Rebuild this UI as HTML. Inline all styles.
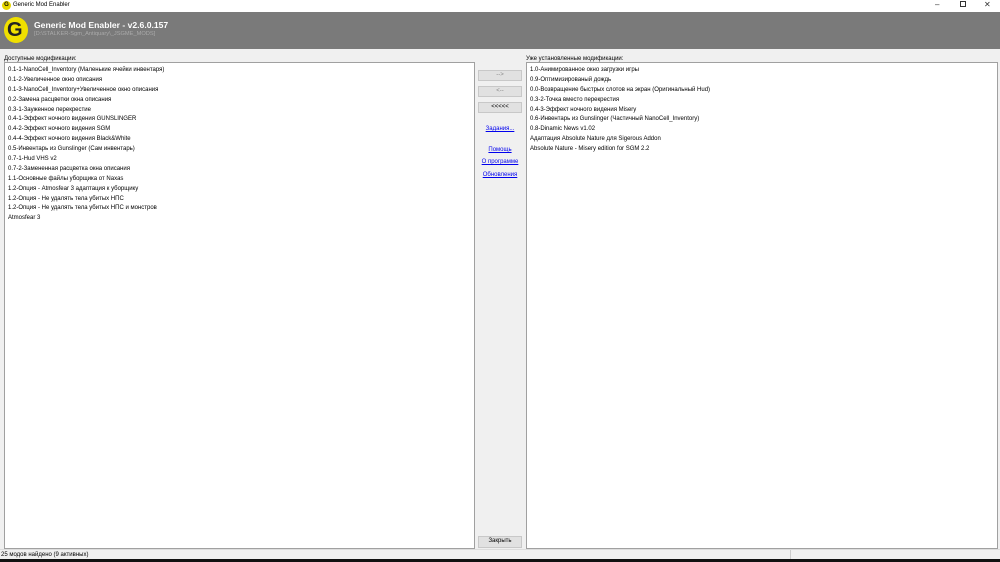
<!DOCTYPE html>
<html><head><meta charset="utf-8"><style>
*{margin:0;padding:0;box-sizing:border-box}
body{width:1000px;height:562px;background:#f0f0f0;font-family:"Liberation Sans","Noto Sans CJK SC",sans-serif;font-size:6px;color:#000;position:relative;overflow:hidden}
.abs{position:absolute}
.list{position:absolute;background:#fff;border:1px solid #a0a0a0;top:62px;height:487px;padding-top:3px}
.list div{height:9.9px;line-height:9.9px;padding-left:3px;white-space:nowrap}
.btn{position:absolute;left:478px;width:44px;height:11px;background:#e1e1e1;border:1px solid #c8c8c8;text-align:center;line-height:9px;color:#888}
.lnk{position:absolute;left:478px;width:44px;text-align:center;color:#0000ee;text-decoration:underline}
</style></head><body>
<div class="abs" style="left:0;top:0;width:1000px;height:12px;background:#fff"></div>
<div class="abs" style="left:2px;top:1px;width:9px;height:9px;border-radius:50%;background:#e8d800;font-size:6px;font-weight:bold;text-align:center;line-height:9px">G</div>
<div class="abs" style="left:13px;top:2px;font-size:6px">Generic Mod Enabler</div>
<div class="abs" style="left:935px;top:0;font-size:8px;color:#333">–</div>
<div class="abs" style="left:960px;top:1px;width:6px;height:6px;border:1px solid #333"></div>
<div class="abs" style="left:984px;top:0px;font-size:8px;color:#333">✕</div>
<div class="abs" style="left:0;top:12px;width:1000px;height:37px;background:#7a7a7a"></div>
<div class="abs" style="left:4px;top:17px;width:24px;height:26px;border-radius:50%;background:#f0e000;font:bold 20px 'Liberation Sans',sans-serif;line-height:26px;padding-left:3px;color:#222">G</div>
<div class="abs" style="left:34px;top:20px;font-size:8.6px;font-weight:bold;color:#fff">Generic Mod Enabler - v2.6.0.157</div>
<div class="abs" style="left:34px;top:31px;font-size:5.7px;color:#aaa">[D:\STALKER-Sgm_Antiquary\_JSGME_MODS]</div>
<div class="abs" style="left:4px;top:56px">Доступные модификации:</div>
<div class="abs" style="left:526px;top:56px">Уже установленные модификации:</div>
<div class="list" style="left:4px;width:471px">
<div>0.1-1-NanoCell_Inventory (Маленькие ячейки инвентаря)</div>
<div>0.1-2-Увеличенное окно описания</div>
<div>0.1-3-NanoCell_Inventory+Увеличенное окно описания</div>
<div>0.2-Замена расцветки окна описания</div>
<div>0.3-1-Зауженное перекрестие</div>
<div>0.4-1-Эффект ночного видения GUNSLINGER</div>
<div>0.4-2-Эффект ночного видения SGM</div>
<div>0.4-4-Эффект ночного видения Black&amp;White</div>
<div>0.5-Инвентарь из Gunslinger (Сам инвентарь)</div>
<div>0.7-1-Hud VHS v2</div>
<div>0.7-2-Замененная расцветка окна описания</div>
<div>1.1-Основные файлы уборщика от Naxas</div>
<div>1.2-Опция - Atmosfear 3 адаптация к уборщику</div>
<div>1.2-Опция - Не удалять тела убитых НПС</div>
<div>1.2-Опция - Не удалять тела убитых НПС и монстров</div>
<div>Atmosfear 3</div>
</div>
<div class="list" style="left:526px;width:472px">
<div>1.0-Анимированное окно загрузки игры</div>
<div>0.9-Оптимизированый дождь</div>
<div>0.0-Возвращение быстрых слотов на экран (Оригинальный Hud)</div>
<div>0.3-2-Точка вместо перекрестия</div>
<div>0.4-3-Эффект ночного видения Misery</div>
<div>0.6-Инвентарь из Gunslinger (Частичный NanoCell_Inventory)</div>
<div>0.8-Dinamic News v1.02</div>
<div>Адаптация Absolute Nature для Sigerous Addon</div>
<div>Absolute Nature - Misery edition  for SGM 2.2</div>
</div>
<div class="btn" style="top:70px">--&gt;</div>
<div class="btn" style="top:86px">&lt;--</div>
<div class="btn" style="top:102px;color:#000">&lt;&lt;&lt;&lt;&lt;</div>
<div class="lnk" style="top:126px">Задания...</div>
<div class="lnk" style="top:147px">Помощь</div>
<div class="lnk" style="top:159px">О программе</div>
<div class="lnk" style="top:172px">Обновления</div>
<div class="btn" style="top:536px;height:12px;color:#000">Закрыть</div>
<div class="abs" style="left:0;top:549px;width:1000px;height:10px;background:#f0f0f0;border-top:1px solid #ddd"></div>
<div class="abs" style="left:790px;top:550px;width:1px;height:9px;background:#ccc"></div>
<div class="abs" style="left:1px;top:552px;font-size:6px">25 модов найдено (9 активных)</div>
<div class="abs" style="left:0;top:559px;width:1000px;height:3px;background:#111"></div>
</body></html>
